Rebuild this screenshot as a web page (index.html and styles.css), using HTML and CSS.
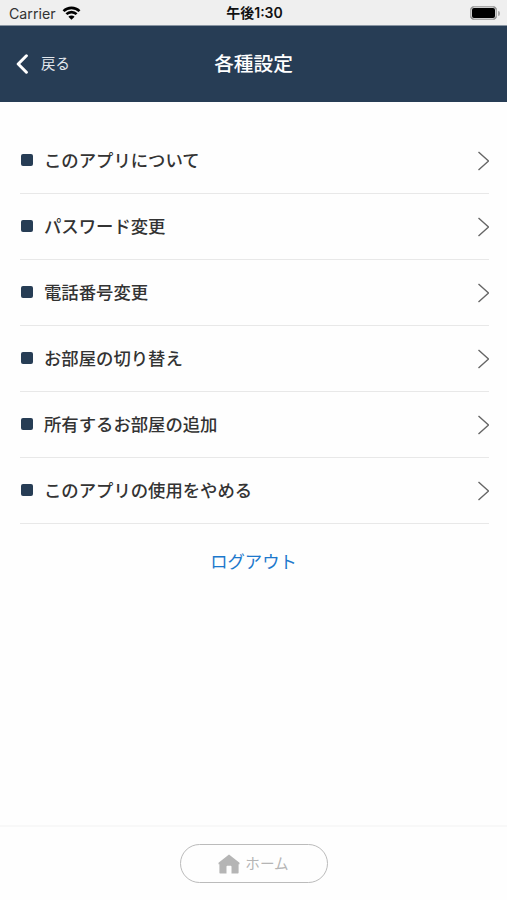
FILE: index.html
```html
<!DOCTYPE html>
<html lang="ja">
<head>
    <meta charset="UTF-8">
    <meta name="viewport" content="width=device-width, initial-scale=1.0">
    <title>各種設定</title>
    <link rel="stylesheet" href="styles.css">
</head>
<body>
    <div class="status-bar">
        <div class="carrier">
            <span>Carrier</span>
            <svg class="wifi" viewBox="0 0 18 14" width="19" height="14">
                <path d="M1 5.2a11.3 11.3 0 0 1 16 0" />
                <path d="M3.9 8.2a7.2 7.2 0 0 1 10.2 0" />
                <path class="wifi-dot" d="M9 13.8L5.9 10.7a4.4 4.4 0 0 1 6.2 0z" />
            </svg>
        </div>
        <div class="time">午後1:30</div>
        <div class="battery">
            <div class="battery-body"></div>
            <div class="battery-tip"></div>
        </div>
    </div>
    <header class="header">
        <a href="#" class="back">
            <svg viewBox="0 0 12 20" width="12" height="20">
                <path d="M10.4 1.8L2.2 10l8.2 8.2" />
            </svg>
            <span>戻る</span>
        </a>
        <h1>各種設定</h1>
    </header>
    <main class="content">
        <ul class="menu">
            <li><a href="#"><span class="label">このアプリについて</span><svg class="arrow" viewBox="0 0 12 20" width="12" height="20"><path d="M1.5 1l10 9-10 9" /></svg></a></li>
            <li><a href="#"><span class="label">パスワード変更</span><svg class="arrow" viewBox="0 0 12 20" width="12" height="20"><path d="M1.5 1l10 9-10 9" /></svg></a></li>
            <li><a href="#"><span class="label">電話番号変更</span><svg class="arrow" viewBox="0 0 12 20" width="12" height="20"><path d="M1.5 1l10 9-10 9" /></svg></a></li>
            <li><a href="#"><span class="label">お部屋の切り替え</span><svg class="arrow" viewBox="0 0 12 20" width="12" height="20"><path d="M1.5 1l10 9-10 9" /></svg></a></li>
            <li><a href="#"><span class="label">所有するお部屋の追加</span><svg class="arrow" viewBox="0 0 12 20" width="12" height="20"><path d="M1.5 1l10 9-10 9" /></svg></a></li>
            <li><a href="#"><span class="label">このアプリの使用をやめる</span><svg class="arrow" viewBox="0 0 12 20" width="12" height="20"><path d="M1.5 1l10 9-10 9" /></svg></a></li>
        </ul>
        <a href="#" class="logout">ログアウト</a>
    </main>
    <footer class="footer">
        <a href="#" class="home-button">
            <svg viewBox="0 0 22 20" width="22" height="20">
                <path d="M11 .4L.5 8.8v1.4h.9v8.2c0 .6.4 1 1 1h6.1v-6.6c0-.7.4-1 1-1h3c.6 0 1 .3 1 1v6.6h6.1c.6 0 1-.4 1-1v-8.2h.9V8.8z" />
            </svg>
            <span>ホーム</span>
        </a>
    </footer>
</body>
</html>
```

FILE: styles.css
```css
* {
    box-sizing: border-box;
}
body {
    font-family: Inter, "Noto Sans CJK JP", sans-serif;
    margin: 0;
    height: 100vh;
    display: flex;
    flex-direction: column;
    background-color: #fefefe;
    color: #333;
}
a {
    color: inherit;
    text-decoration: none;
}
.status-bar {
    height: 26px;
    display: grid;
    grid-template-columns: 1fr auto 1fr;
    align-items: center;
    padding: 1px 7px 0 9px;
    background-color: #efefef;
    border-bottom: 1px solid #8995a2;
    font-size: 14px;
}
.carrier {
    display: flex;
    align-items: center;
    gap: 6px;
    font-size: 14.2px;
}
.wifi {
    fill: none;
    stroke: #000;
    stroke-width: 2.6;
}
.wifi .wifi-dot {
    fill: #000;
    stroke: none;
}
.time {
    color: #111;
    font-weight: 600;
    line-height: 20px;
    padding-bottom: 1px;
}
.battery {
    display: flex;
    align-items: center;
    justify-content: flex-end;
    gap: 1px;
}
.battery-body {
    width: 27px;
    height: 14px;
    border: 1px solid #aaa;
    border-radius: 4px;
    background-color: #000;
    box-shadow: inset 0 0 0 1px #ccc;
}
.battery-tip {
    width: 2px;
    height: 5px;
    border-radius: 0 3px 3px 0;
    background-color: #aaa;
}
.header {
    height: 76px;
    display: grid;
    grid-template-columns: 1fr auto 1fr;
    align-items: center;
    padding: 0 16px;
    background-color: #273d55;
    color: #fff;
}
.header h1 {
    margin: 0;
    padding-bottom: 3px;
    font-size: 19.7px;
    font-weight: 500;
}
.back {
    display: flex;
    align-items: center;
    gap: 13px;
    font-size: 14.4px;
    color: #e3e8ed;
}
.back span {
    padding-bottom: 3px;
}
.back svg {
    fill: none;
    stroke: #fff;
    stroke-width: 3;
    stroke-linecap: round;
    stroke-linejoin: round;
}
.content {
    flex: 1;
    padding: 26px 18px 0 20px;
}
.menu {
    list-style: none;
    margin: 0;
    padding: 0;
}
.menu a {
    display: flex;
    align-items: center;
    height: 66px;
    border-bottom: 1px solid #e8e8e8;
    font-size: 17.35px;
    font-weight: 500;
}
.menu a::before {
    content: "";
    width: 12px;
    height: 12px;
    margin: 0 11px 1px 1px;
    border-radius: 2px;
    background-color: #273d55;
}
.label {
    flex: 1;
    padding-bottom: 3px;
}
.arrow {
    fill: none;
    stroke: #666;
    stroke-width: 1.4;
}
.logout {
    display: block;
    margin: 24px 2px 0 0;
    text-align: center;
    font-size: 17.35px;
    color: #1c78cc;
}
.footer {
    height: 75px;
    display: flex;
    justify-content: center;
    padding-top: 17px;
    border-top: 2px solid #f8f8f8;
}
.home-button {
    width: 148px;
    height: 39px;
    display: flex;
    align-items: center;
    justify-content: center;
    gap: 5px;
    border: 1.5px solid #bbb;
    border-radius: 20px;
    font-size: 14.6px;
    color: #b5b5b5;
}
.home-button span {
    padding-bottom: 2px;
}
.home-button svg {
    fill: #b5b5b5;
}
```
